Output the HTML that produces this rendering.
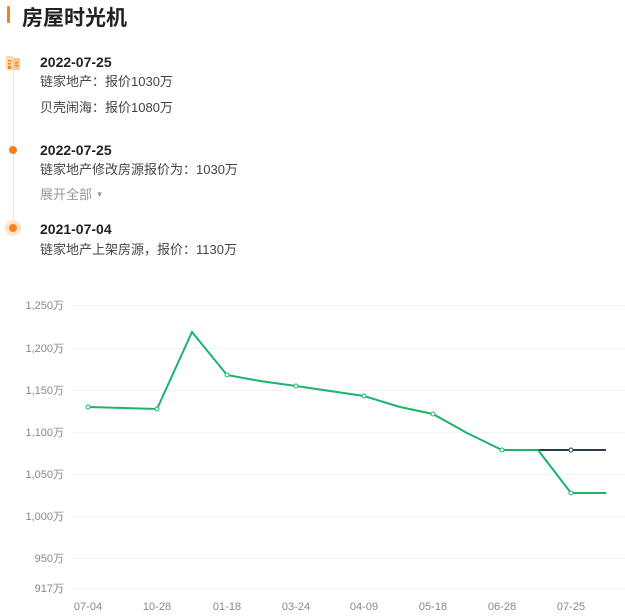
<!DOCTYPE html>
<html><head><meta charset="utf-8"><style>
body{margin:0;width:625px;height:616px;background:#fff;font-family:"Liberation Sans","Noto Sans CJK SC",sans-serif;position:relative;overflow:hidden}
.a{position:absolute;white-space:nowrap}
.d{font-weight:bold;font-size:14px;color:#222}
.t{font-size:13px;color:#444}
</style></head><body>
<div class="a" style="left:7px;top:6px;width:3px;height:17px;background:#f5821f;border-radius:1px"></div>
<div class="a" style="left:22px;top:2px;font-size:21px;font-weight:bold;color:#222">房屋时光机</div>
<div class="a" style="left:13px;top:70px;width:1px;height:150px;background:#fde0c4"></div>
<svg class="a" style="left:5px;top:54px" width="16" height="17"><path d="M1 2h7v14H1z" fill="#fcd9b5"/><path d="M8 4h7v12H8z" fill="#fdc594"/><rect x="3" y="6" width="3" height="1.5" fill="#f5821f"/><rect x="3" y="9" width="3" height="1.5" fill="#f5821f"/><rect x="3" y="12" width="3" height="3" fill="#f5821f"/><rect x="10" y="8" width="3" height="1.5" fill="#f5821f"/><rect x="10" y="11" width="3" height="1.5" fill="#f5821f"/></svg>
<div class="a" style="left:9px;top:146px;width:8px;height:8px;border-radius:50%;background:#f5821f"></div>
<div class="a" style="left:5px;top:220px;width:16px;height:16px;border-radius:50%;background:#fde3cc"></div>
<div class="a" style="left:9px;top:224px;width:8px;height:8px;border-radius:50%;background:#f5821f"></div>
<div class="a d" style="left:40px;top:54px">2022-07-25</div>
<div class="a t" style="left:40px;top:71px">链家地产：报价1030万</div>
<div class="a t" style="left:40px;top:97px">贝壳闹海：报价1080万</div>
<div class="a d" style="left:40px;top:142px">2022-07-25</div>
<div class="a t" style="left:40px;top:159px">链家地产修改房源报价为：1030万</div>
<div class="a t" style="left:40px;top:184px;color:#999">展开全部 <span style="font-size:8px;vertical-align:2px">▼</span></div>
<div class="a d" style="left:40px;top:221px">2021-07-04</div>
<div class="a t" style="left:40px;top:239px">链家地产上架房源，报价：1130万</div>
<svg class="a" style="left:0;top:0" width="625" height="616" font-family="Liberation Sans,Noto Sans CJK SC,sans-serif" font-size="11" fill="#888">
<g stroke="#f3f3f3" stroke-width="1">
<line x1="72" x2="625" y1="305.5" y2="305.5"/><line x1="72" x2="625" y1="348.5" y2="348.5"/><line x1="72" x2="625" y1="390.5" y2="390.5"/><line x1="72" x2="625" y1="432.5" y2="432.5"/><line x1="72" x2="625" y1="474.5" y2="474.5"/><line x1="72" x2="625" y1="516.5" y2="516.5"/><line x1="72" x2="625" y1="558.5" y2="558.5"/><line x1="72" x2="625" y1="588.5" y2="588.5"/></g>
<g text-anchor="end"><text x="64" y="309">1,250万</text><text x="64" y="352">1,200万</text><text x="64" y="394">1,150万</text><text x="64" y="436">1,100万</text><text x="64" y="478">1,050万</text><text x="64" y="520">1,000万</text><text x="64" y="562">950万</text><text x="64" y="592">917万</text></g>
<g text-anchor="middle"><text x="88" y="610">07-04</text><text x="157" y="610">10-28</text><text x="227" y="610">01-18</text><text x="296" y="610">03-24</text><text x="364" y="610">04-09</text><text x="433" y="610">05-18</text><text x="502" y="610">06-28</text><text x="571" y="610">07-25</text></g>
<polyline fill="none" stroke="#2d3a4a" stroke-width="2" points="538,450 606,450"/>
<polyline fill="none" stroke="#1db36b" stroke-width="2" points="88,407 157,409 192,332 227,375 260,381 296,386 330,391 364,396 400,407 433,414 467,433 502,450 538,450 571,493 606,493"/>
<g fill="#fff" stroke="#1db36b" stroke-width="1"><circle cx="88" cy="407" r="2"/><circle cx="157" cy="409" r="2"/><circle cx="227" cy="375" r="2"/><circle cx="296" cy="386" r="2"/><circle cx="364" cy="396" r="2"/><circle cx="433" cy="414" r="2"/><circle cx="502" cy="450" r="2"/><circle cx="571" cy="493" r="2"/></g>
<circle cx="571" cy="450" r="2" fill="#fff" stroke="#2d3a4a"/>
</svg>
</body></html>
